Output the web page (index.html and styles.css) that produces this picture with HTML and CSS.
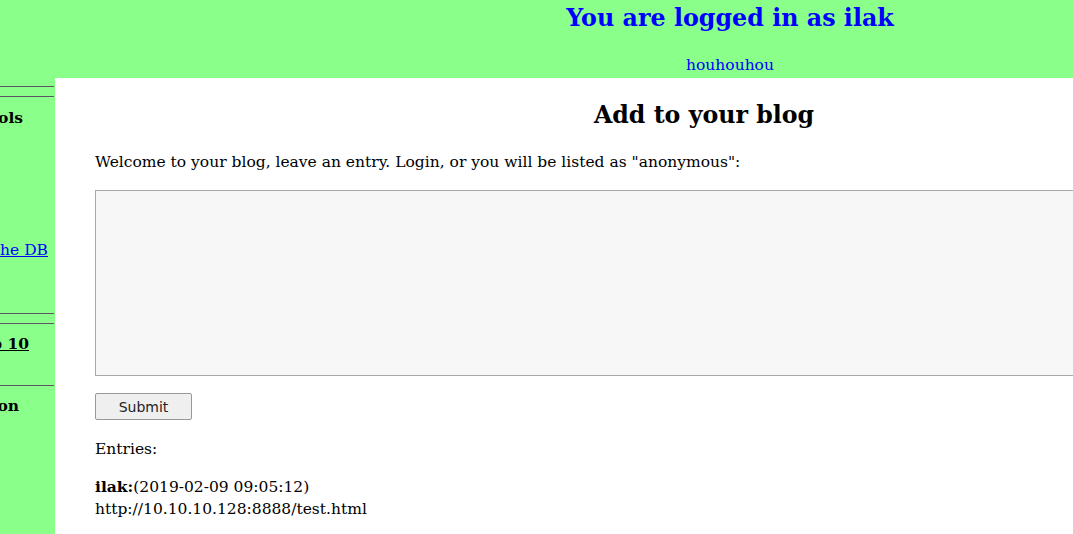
FILE: index.html
```html
<!DOCTYPE html>
<html>
<head>
<meta charset="utf-8">
<title>Add to your blog</title>
<link rel="stylesheet" href="styles.css">
</head>
<body>
<div class="page">
  <header class="header">
    <div class="logged">You are logged in as ilak</div>
    <div class="sig">houhouhou</div>
  </header>
  <div class="main">
    <nav class="sidebar">
      <div class="rule r1"></div>
      <div class="rule r2"></div>
      <div class="item bold tools">Core Controls</div>
      <div class="item db"><a href="#">Setup/reset the DB</a></div>
      <div class="rule r3"></div>
      <div class="rule r2"></div>
      <div class="item bold top"><a href="#" class="blacklink">OWASP Top 10</a></div>
      <div class="rule r4"></div>
      <div class="item bold doc">Documentation</div>
    </nav>
    <section class="content">
      <h2 class="title">Add to your blog</h2>
      <p class="intro">Welcome to your blog, leave an entry. Login, or you will be listed as "anonymous":</p>
      <textarea class="entry"></textarea>
      <button class="submit">Submit</button>
      <p class="entries-label">Entries:</p>
      <div class="post"><b>ilak:</b>(2019-02-09 09:05:12)<br>http://10.10.10.128:8888/test.html</div>
    </section>
  </div>
</div>
</body>
</html>
```

FILE: styles.css
```css
html, body {
  margin: 0;
  padding: 0;
  overflow: hidden;
  background: #8aff8a;
}
body {
  font-family: "DejaVu Serif", serif;
  font-size: 15.5px;
  color: #000;
}
.page {
  width: 1353px;
}
.header {
  height: 78px;
  display: flex;
  flex-direction: column;
  align-items: center;
  padding-left: 107px;
  box-sizing: border-box;
}
.logged {
  color: #0000ff;
  font-weight: bold;
  font-size: 23.8px;
  line-height: 28px;
  margin-top: 4px;
}
.sig {
  color: #0000ff;
  margin-top: 23px;
  line-height: 20px;
}
.main {
  display: flex;
  align-items: flex-start;
}
.sidebar {
  width: 55px;
  flex: none;
  overflow: hidden;
}
.rule {
  height: 0;
  border-top: 1px solid #5e5566;
  margin-right: 1px;
}
.r1 { margin-top: 8px; }
.r2 { margin-top: 9px; }
.r3 { margin-top: 53px; }
.r4 { margin-top: 31px; }
.item {
  display: flex;
  justify-content: flex-end;
  white-space: nowrap;
  line-height: 20px;
}
.bold { font-weight: bold; }
.tools { margin-top: 11px; padding-right: 32px; }
.db { margin-top: 112px; padding-right: 7px; }
.top { margin-top: 10px; padding-right: 26px; }
.doc { margin-top: 10px; padding-right: 36px; }
.item a { color: #0000ff; }
.item a.blacklink { color: #000; }
.content {
  background: #fff;
  width: 1298px;
  padding: 0 40px 40px 40px;
  box-sizing: border-box;
}
.title {
  margin: 0;
  padding-top: 22px;
  text-align: center;
  font-size: 23.7px;
  line-height: 30px;
}
.intro {
  margin: 22px 0 0 0;
  line-height: 20px;
}
.entry {
  display: block;
  width: 100%;
  height: 186px;
  margin: 18px 0 0 0;
  box-sizing: border-box;
  background: #f7f7f7;
  border: 1px solid #a9a9a9;
  resize: none;
}
.submit {
  display: block;
  margin-top: 17px;
  width: 97px;
  height: 27px;
  font-family: "DejaVu Sans", sans-serif;
  font-size: 14px;
  color: #222;
  background: #efefef;
  border: 1px solid #999;
  border-radius: 2px;
  padding: 0;
}
.entries-label {
  margin: 19px 0 0 0;
  line-height: 20px;
}
.post {
  margin-top: 17px;
  line-height: 22px;
}
```
